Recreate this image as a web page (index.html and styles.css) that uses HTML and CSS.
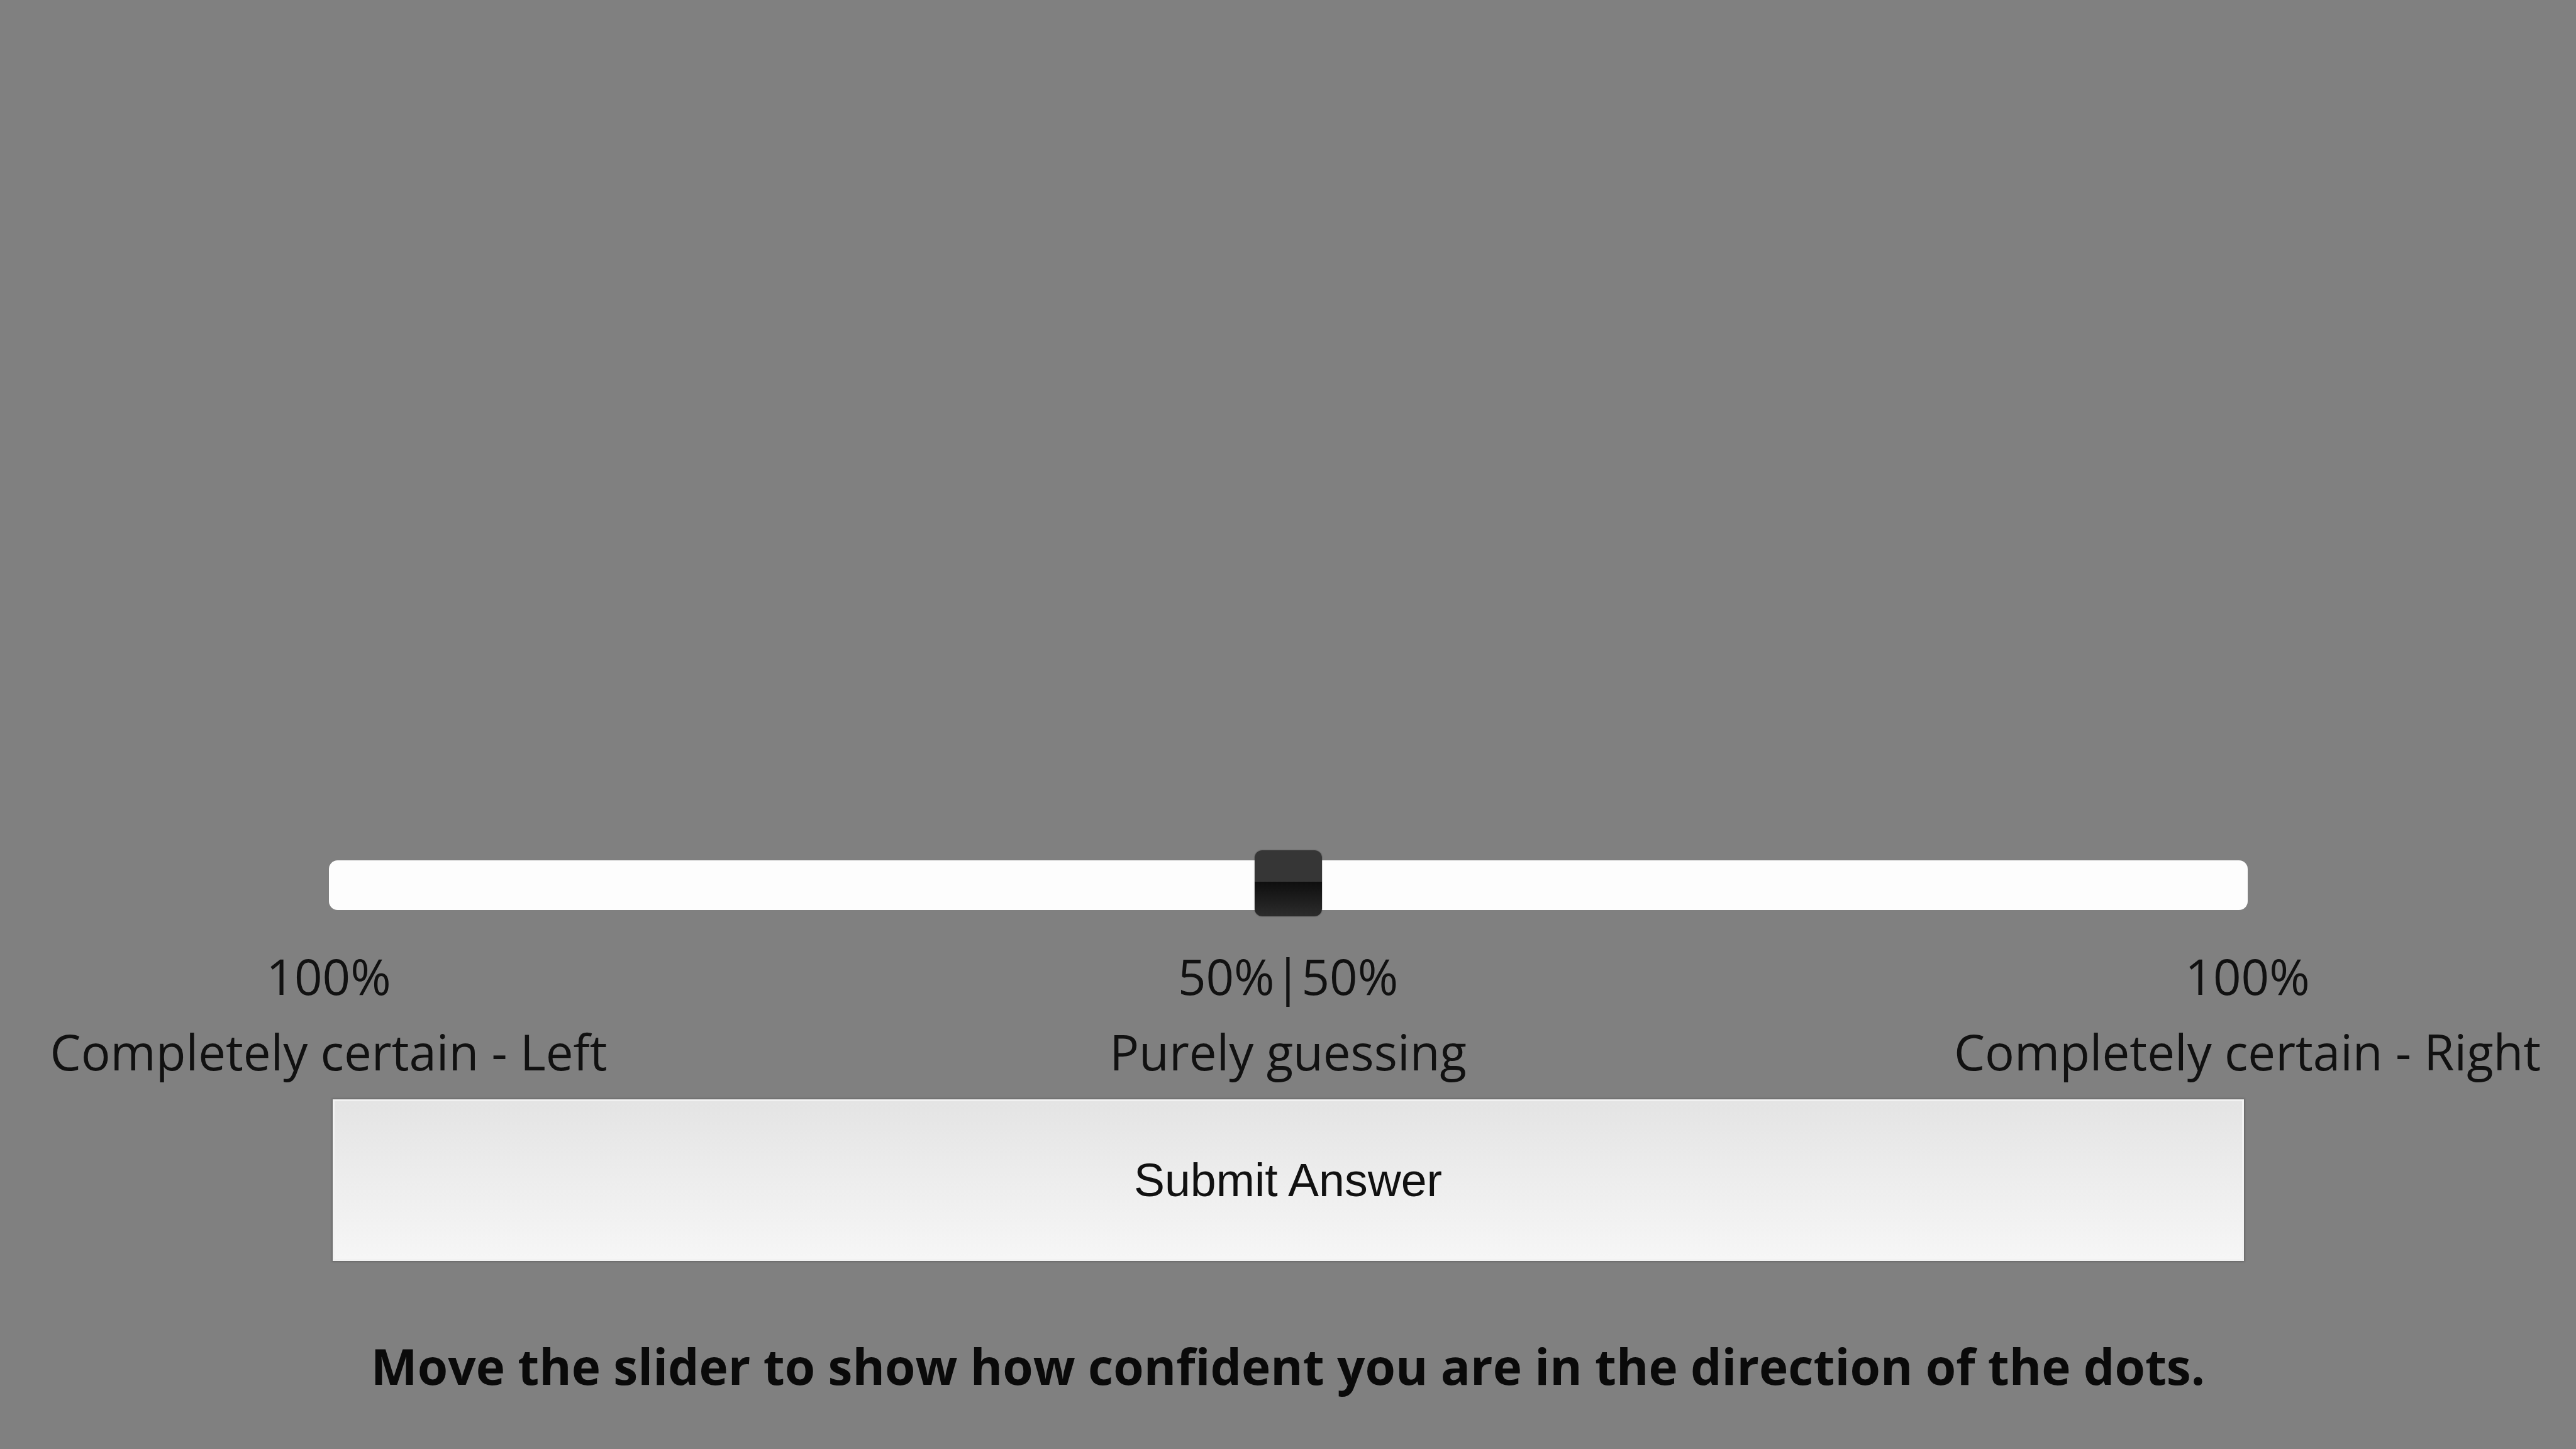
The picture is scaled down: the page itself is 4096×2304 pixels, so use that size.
FILE: index.html
```html
<!DOCTYPE html>
<html lang="en">
<head>
<meta charset="utf-8">
<title>Confidence slider</title>
<link rel="stylesheet" href="styles.css">
</head>
<body>
<main class="page">
  <div class="stimulus"></div>
  <div class="slider">
    <div class="track"></div>
    <div class="thumb"><div class="thumb-top"></div><div class="thumb-bottom"></div></div>
  </div>
  <div class="labels">
    <div class="label"><span class="pct">100%</span><span>Completely certain - Left</span></div>
    <div class="label"><span class="pct">50%|50%</span><span>Purely guessing</span></div>
    <div class="label"><span class="pct">100%</span><span>Completely certain - Right</span></div>
  </div>
  <button class="submit" type="button">Submit Answer</button>
  <p class="prompt">Move the slider to show how confident you are in the direction of the dots.</p>
</main>
</body>
</html>
```
FILE: styles.css
```css
html, body {
  margin: 0;
  padding: 0;
  background: #808080;
}
body {
  font-family: "Open Sans", "Liberation Sans", Arial, sans-serif;
  color: #111;
  overflow: hidden;
}
.page {
  width: 4096px;
  height: 2304px;
  display: flex;
  flex-direction: column;
  align-items: center;
}
.stimulus {
  height: 1352px;
  flex: none;
}
.slider {
  width: 3051px;
  height: 105px;
  display: grid;
  flex: none;
}
.track {
  grid-area: 1 / 1;
  align-self: start;
  margin-top: 16px;
  height: 79px;
  background: #fdfdfd;
  border-radius: 14px;
}
.thumb {
  grid-area: 1 / 1;
  justify-self: center;
  width: 107px;
  height: 105px;
  border-radius: 12px;
  overflow: hidden;
  display: flex;
  flex-direction: column;
  box-shadow: 0 0 2px rgba(0,0,0,0.5);
}
.thumb-top {
  height: 50px;
  background: #363636;
}
.thumb-bottom {
  flex: 1;
  background: linear-gradient(#0e0e0e, #2c2c2c);
}
.labels {
  width: 3051px;
  display: flex;
  justify-content: space-between;
  margin-top: 35px;
  font-size: 78px;
  line-height: 120px;
}
.label {
  width: 0;
  display: flex;
  flex-direction: column;
  align-items: center;
  white-space: nowrap;
}
.submit {
  width: 3039px;
  height: 257px;
  margin-top: 16px;
  font-family: "Liberation Sans", Arial, sans-serif;
  font-size: 73.5px;
  color: #111;
  background: linear-gradient(#e4e4e4, #f6f6f6);
  border: 3px solid #f2f2f2;
  box-shadow: 0 0 3px 1px rgba(60,60,60,0.45);
  padding: 0;
}
.prompt {
  margin: 107px 0 0;
  font-weight: 700;
  font-size: 78.3px;
  line-height: 120px;
  color: #0a0a0a;
  white-space: nowrap;
}
```
